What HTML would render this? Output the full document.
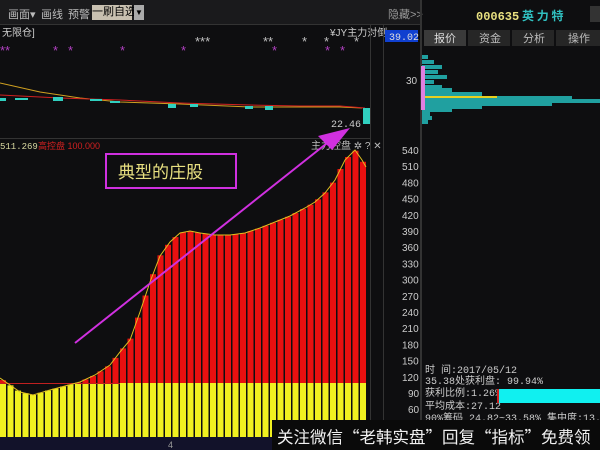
<!DOCTYPE html>
<html><head><meta charset="utf-8"><style>
body{margin:0;width:600px;height:450px;overflow:hidden;background:#0e0e10;font-family:"Liberation Sans","Noto Sans CJK SC",sans-serif;position:relative}
.a{position:absolute;white-space:nowrap}
</style></head><body>
<div class="a" style="left:0;top:0;width:420px;height:24px;background:#1a1a1c;border-bottom:1px solid #333"></div>
<div class="a" style="left:8px;top:6px;font-size:11px;color:#bbb">画面▾</div>
<div class="a" style="left:41px;top:6px;font-size:11px;color:#bbb">画线</div>
<div class="a" style="left:68px;top:6px;font-size:11px;color:#bbb">预警</div>
<div class="a" style="left:92px;top:5px;width:40px;height:15px;background:#c8c0b0;color:#000;font-size:11px;line-height:15px;text-align:center">一刷自选</div>
<div class="a" style="left:134px;top:5px;width:10px;height:15px;background:#aaa;color:#000;font-size:8px;line-height:15px;text-align:center">▼</div>
<div class="a" style="left:388px;top:6px;font-size:11px;color:#999">隐藏&gt;&gt;</div>
<div class="a" style="left:2px;top:24px;font-size:10px;color:#ccc">无限仓]</div>
<div class="a" style="left:330px;top:24px;font-size:10px;color:#ccc">¥JY主力对倒</div>
<svg class="a" style="left:0;top:0" width="600" height="450">
<g font-size="13" fill="#b040c0" font-family="Liberation Sans">
<text x="0" y="55">**</text><text x="53" y="55">*</text><text x="68" y="55">*</text><text x="120" y="55">*</text><text x="181" y="55">*</text>
<text x="272" y="55">*</text><text x="325" y="55">*</text><text x="340" y="55">*</text>
</g>
<g font-size="13" fill="#c0c0c0"><text x="195" y="46">***</text><text x="263" y="46">**</text><text x="302" y="46">*</text><text x="324" y="46">*</text><text x="354" y="46">*</text></g>
<polyline points="0,83 40,92 80,98 120,102 180,104 250,107 300,107 340,107 362,108" fill="none" stroke="#d0a020" stroke-width="1"/>
<polyline points="0,95 60,98 120,100 180,103 250,105 300,106 340,106 365,108" fill="none" stroke="#d02020" stroke-width="1"/>
<g fill="#30d0c0"><rect x="0" y="98" width="6" height="3"/><rect x="15" y="98" width="13" height="2"/><rect x="53" y="97" width="10" height="4"/><rect x="90" y="99" width="12" height="2"/><rect x="110" y="101" width="10" height="2"/><rect x="168" y="104" width="8" height="4"/><rect x="190" y="104" width="8" height="3"/><rect x="245" y="106" width="8" height="3"/><rect x="265" y="106" width="8" height="4"/><rect x="363" y="108" width="7" height="16"/></g>
<text x="331" y="127" font-size="10" fill="#ccc" font-family="Liberation Mono">22.46</text>
<rect x="370" y="24" width="1" height="426" fill="#333"/>
<rect x="383" y="24" width="1" height="426" fill="#333"/>
<rect x="420" y="0" width="2" height="450" fill="#333"/>
<rect x="385" y="30" width="33" height="12" fill="#1040d0"/>
<text x="389" y="40" font-size="10" fill="#ddd" font-family="Liberation Mono">39.02</text>
<text x="406" y="84" font-size="10" fill="#ccc">30</text>
<rect x="0" y="138" width="370" height="1" fill="#333"/>
<text x="0" y="149" font-size="9" fill="#d8d8a0" font-family="Liberation Mono">511.269</text>
<text x="38" y="149" font-size="9" fill="#d02020">高控盘 100.000</text>
<text x="311" y="149" font-size="10" fill="#bbb">主力控盘 ✲ ? ✕</text>
<g id="bars"></g>
<polyline id="curve" fill="none" stroke="#e0c020" stroke-width="1"/>
<g font-size="10" fill="#ccc" id="ax"></g>
<rect x="0" y="437" width="370" height="13" fill="#12122a"/>
<text x="168" y="448" font-size="9" fill="#999">4</text>
<line x1="75" y1="343" x2="336" y2="136" stroke="#d030e0" stroke-width="2"/>
<polygon points="350,128 318,136 332,150" fill="#d030e0"/>
<rect x="106" y="154" width="130" height="34" fill="none" stroke="#d030e0" stroke-width="2"/>
<text x="118" y="178" font-size="17" fill="#e8e080" font-family="Noto Sans CJK SC">典型的庄股</text>
<text x="476" y="20" font-size="12" fill="#e8e080" font-family="Liberation Mono" font-weight="bold">000635</text>
<text x="522" y="20" font-size="12" fill="#30c0c0" font-weight="bold" font-family="Noto Sans CJK SC">英 力 特</text>
<rect x="590" y="6" width="12" height="16" fill="#333"/>
<g font-size="11" font-family="Noto Sans CJK SC">
<rect x="424" y="30" width="42" height="16" fill="#3a3a3a"/><text x="434" y="42" fill="#ddd">报价</text>
<rect x="468" y="30" width="42" height="16" fill="#262626"/><text x="479" y="42" fill="#bbb">资金</text>
<rect x="512" y="30" width="42" height="16" fill="#262626"/><text x="523" y="42" fill="#bbb">分析</text>
<rect x="556" y="30" width="44" height="16" fill="#262626"/><text x="568" y="42" fill="#bbb">操作</text>
</g>
<g fill="#20a0a0" id="chip"></g>
<rect x="421" y="66" width="4" height="44" fill="#e080e0"/>
<rect x="425" y="96" width="72" height="2" fill="#e8d020"/>
<g font-size="10" fill="#ccc" font-family="Liberation Mono">
<text x="425" y="373">时      间:2017/05/12</text>
<text x="425" y="384">35.38处获利盘: 99.94%</text>
<text x="425" y="396">获利比例:1.26%</text>
<text x="425" y="409">平均成本:27.12</text>
<text x="425" y="421">90%筹码 24.82~33.58% 集中度:13.5</text>
</g>
<rect x="498" y="389" width="102" height="14" fill="#10f0f0"/>
<rect x="497" y="389" width="2" height="14" fill="#d02020"/>
<rect x="272" y="420" width="328" height="30" fill="#0a0a0a"/>
<text x="277" y="443" font-size="16.5" fill="#f0f0f0" font-family="Noto Sans CJK SC">关注微信“老韩实盘”回复“指标”免费领</text>
</svg>
<script>
var pts=[[0,378],[10,385],[20,392],[33,395],[50,390],[65,386],[80,382],[95,375],[110,365],[120,352],[130,340],[140,312],[150,282],[160,256],[170,242],[180,233],[190,231],[200,233],[215,235],[230,235],[245,233],[260,228],[275,222],[290,216],[305,208],[315,202],[325,193],[335,180],[345,160],[355,150],[362,160],[366,167]];
function cy(x){for(var i=0;i<pts.length-1;i++){if(x<=pts[i+1][0]){var a=pts[i],b=pts[i+1];return a[1]+(b[1]-a[1])*(x-a[0])/(b[0]-a[0]);}}return pts[pts.length-1][1];}
var g=document.getElementById('bars'),h='';
for(var x=0;x<364;x+=7.5){var c=cy(x+3);
if(c<383){h+='<rect x="'+x+'" y="'+c+'" width="6" height="'+(383-c)+'" fill="#e81010"/><rect x="'+x+'" y="383" width="6" height="54" fill="#f0f020"/>';}
else{h+='<rect x="'+x+'" y="'+c+'" width="6" height="'+(437-c)+'" fill="#f0f020"/>';}}
h+='<rect x="0" y="383" width="120" height="1" fill="#c02020"/>';
g.innerHTML=h;
document.getElementById('curve').setAttribute('points',pts.map(function(p){return p.join(',')}).join(' '));
var ax='';for(var v=540;v>=60;v-=30){var y=150+(540-v)*16.2/30;ax+='<text x="'+(v>=100?402:408)+'" y="'+(y+4)+'">'+v+'</text>';}
document.getElementById('ax').innerHTML=ax;
var ch=[[55,6],[60,12],[65,20],[70,16],[75,25],[80,12],[85,20],[88,30],[92,60],[96,150],[99,178],[102,130],[105,60],[108,30],[112,8],[116,10],[120,6]],s='';
ch.forEach(function(c){s+='<rect x="422" y="'+c[0]+'" width="'+c[1]+'" height="4"/>';});
document.getElementById('chip').innerHTML=s;
</script>
</body></html>
